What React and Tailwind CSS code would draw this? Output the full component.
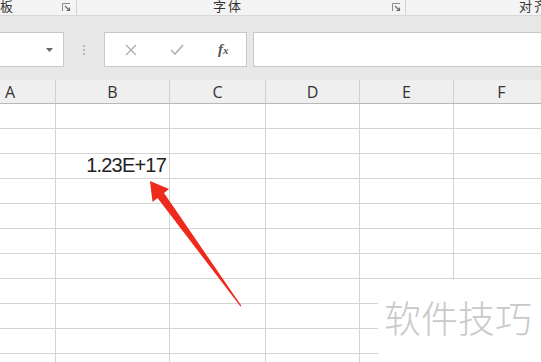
import React from "react";

const cols = [
  { l: "A", w: "w-[56px]", pad: "pl-[5px] justify-start" },
  { l: "B", w: "w-[114px]", pad: "justify-center" },
  { l: "C", w: "w-[96px]", pad: "justify-center" },
  { l: "D", w: "w-[94px]", pad: "justify-center" },
  { l: "E", w: "w-[94px]", pad: "justify-center" },
  { l: "F", w: "w-[96px]", pad: "justify-center" },
];

function Launcher() {
  return (
    <svg width="9" height="9" viewBox="0 0 9 9" className="shrink-0">
      <path d="M0.5 8V0.5H8" fill="none" stroke="#8a8a8a" strokeWidth="1" />
      <path d="M3 3L7.5 7.5M7.5 4.5V7.5H4.5" fill="none" stroke="#6a6a6a" strokeWidth="1.2" />
    </svg>
  );
}

export default function App() {
  const rows = Array.from({ length: 11 });
  const cjk = { fontFamily: '"Noto Sans CJK SC", sans-serif' };
  return (
    <div
      className="relative w-[541px] h-[362px] overflow-hidden bg-white"
      style={{ fontFamily: '"Liberation Sans", "Noto Sans CJK SC", sans-serif' }}
    >
      {/* ribbon */}
      <div className="relative h-[16px] bg-[#f4f4f4] border-b border-[#d8d8d8] text-[13px] leading-[13px] text-[#333]">
        <span className="absolute left-[0px] top-[-1px] whitespace-nowrap" style={cjk}>板</span>
        <div className="absolute left-[62px] top-[3px]"><Launcher /></div>
        <div className="absolute left-[76px] top-0 h-[15px] w-px bg-[#d4d4d4]" />
        <span className="absolute left-[213px] top-[-1px] tracking-[2px] whitespace-nowrap" style={cjk}>字体</span>
        <div className="absolute left-[392px] top-[3px]"><Launcher /></div>
        <div className="absolute left-[405px] top-0 h-[15px] w-px bg-[#d4d4d4]" />
        <span className="absolute left-[519px] top-[-1px] tracking-[2px] whitespace-nowrap" style={cjk}>对齐</span>
      </div>

      {/* formula bar */}
      <div className="h-[64px] bg-[#e8e8e8] flex items-start pt-[16px]">
        <div className="w-[64px] h-[35px] bg-white border border-l-0 border-[#c8c8c8] flex items-center justify-end pr-[10px]">
          <svg width="7" height="4" viewBox="0 0 7 4"><path d="M0 0H7L3.5 4Z" fill="#666" /></svg>
        </div>
        <div className="w-[40px] h-[35px] flex flex-col items-center justify-center gap-[2px]">
          <div className="w-[2px] h-[2px] bg-[#a8a8a8] rounded-full" />
          <div className="w-[2px] h-[2px] bg-[#a8a8a8] rounded-full" />
          <div className="w-[2px] h-[2px] bg-[#a8a8a8] rounded-full" />
        </div>
        <div className="w-[143px] h-[35px] bg-white border border-[#c8c8c8] flex items-center">
          <div className="w-[50px] flex justify-center pl-[2px]">
            <svg width="12" height="12" viewBox="0 0 12 12"><path d="M1 1L11 11M11 1L1 11" stroke="#b0b0b0" strokeWidth="1.4" /></svg>
          </div>
          <div className="w-[46px] flex justify-center">
            <svg width="14" height="11" viewBox="0 0 14 11"><path d="M1 6L5 10L13 1" fill="none" stroke="#b0b0b0" strokeWidth="1.6" /></svg>
          </div>
          <div className="w-[46px] flex justify-center">
            <span className="italic font-bold text-[15px] text-[#555]" style={{ fontFamily: '"Liberation Serif", serif' }}>
              f<span className="text-[11px]">x</span>
            </span>
          </div>
        </div>
        <div className="w-[6px]" />
        <div className="flex-1 h-[35px] bg-white border border-r-0 border-[#c8c8c8]" />
      </div>

      {/* column header */}
      <div className="flex h-[24px] bg-[#efefef] border-b border-[#b8b8b8] text-[16px] text-[#333]" style={{ fontFamily: '"Open Sans", sans-serif' }}>
        {cols.map((c) => (
          <div key={c.l} className={`${c.w} shrink-0 flex items-center ${c.pad} border-r border-[#d0d0d0]`}>
            {c.l}
          </div>
        ))}
      </div>

      {/* grid */}
      {rows.map((_, r) => (
        <div key={r} className="flex h-[25px]">
          {cols.map((c, i) => (
            <div
              key={c.l}
              className={`${c.w} shrink-0 border-r border-b border-[#d4d4d4] flex items-end justify-end pr-[3px] pb-[3px] text-[20px] text-[#222]`}
            >
              {r === 2 && i === 1 ? <span className="tracking-[-0.8px] leading-none">1.23E+17</span> : null}
            </div>
          ))}
        </div>
      ))}

      {/* watermark */}
      <div className="absolute left-[378px] top-[280px] w-[163px] h-[82px] bg-white flex items-start pl-[6px] pt-[17px]">
        <span className="text-[37px] leading-[40px] font-light text-[#c9c9c9] whitespace-nowrap" style={cjk}>
          软件技巧
        </span>
      </div>

      {/* arrow */}
      <svg className="absolute left-0 top-0 pointer-events-none" width="541" height="362" viewBox="0 0 541 362">
        <polygon
          points="150,181 169,189 164,193 241.5,306 240.5,306.5 157.5,198 152.5,202"
          fill="#ee2a1c"
        />
      </svg>
    </div>
  );
}
